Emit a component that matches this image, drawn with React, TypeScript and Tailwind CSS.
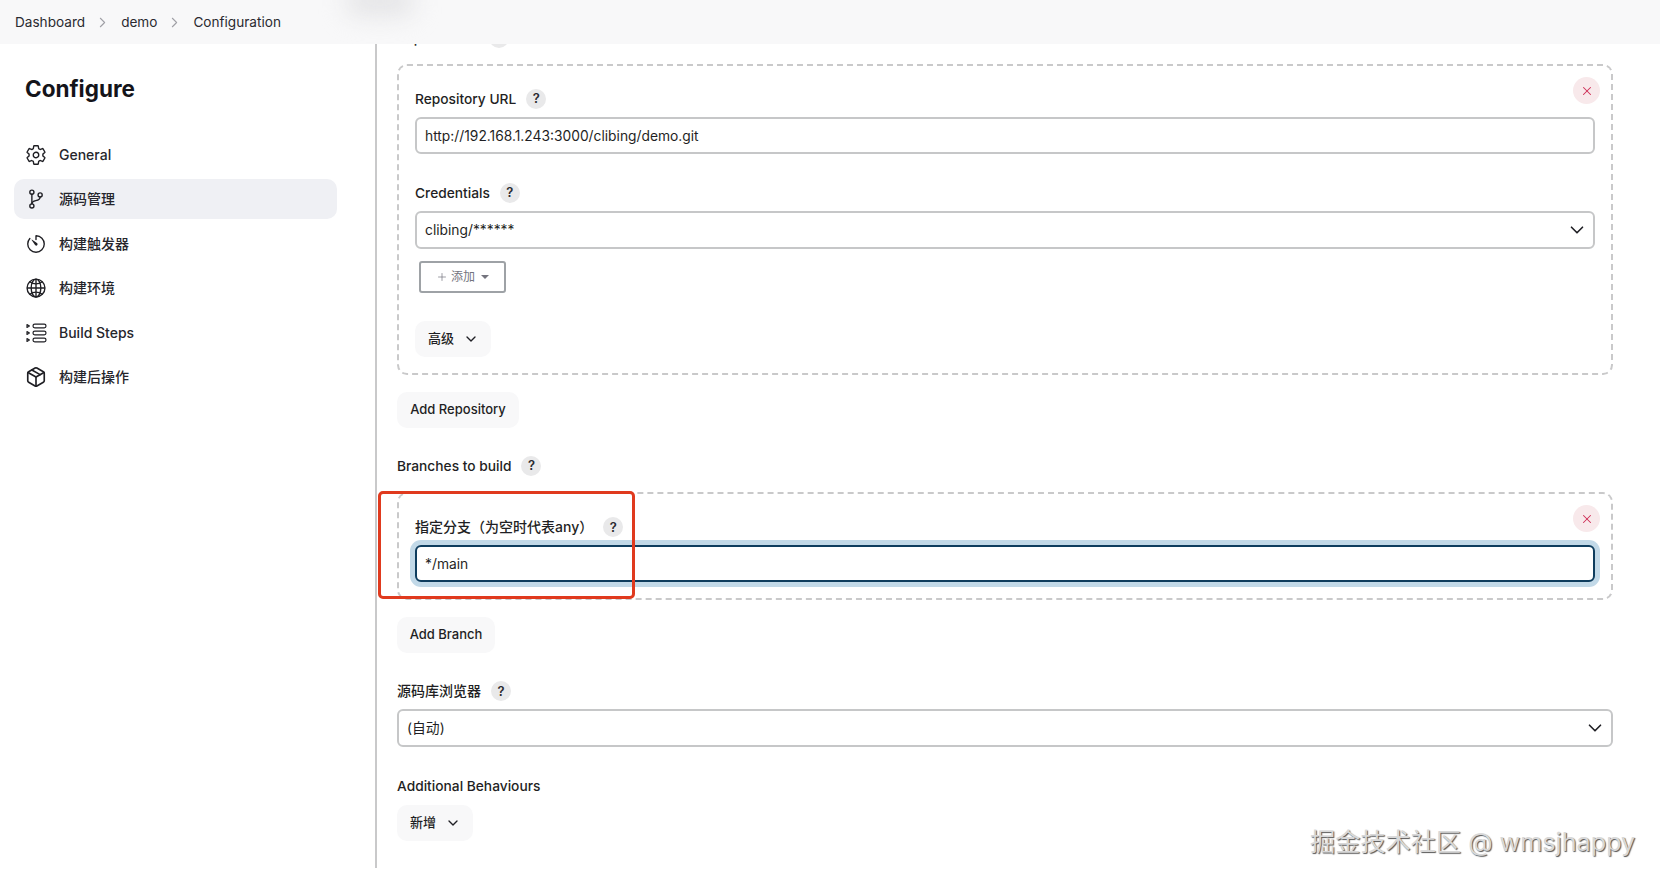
import React from "react";
import { ChevronDown, ChevronRight, X, Package, Plus } from "lucide-react";
import { IoSettingsOutline, IoGitBranchOutline, IoTimerOutline, IoGlobeOutline } from "react-icons/io5";

const font = "[font-family:Inter,'Noto_Sans_CJK_SC',sans-serif]";

function StepsIcon() {
  return (
    <svg width="21" height="20" viewBox="0 0 21 20" fill="none" stroke="currentColor" strokeWidth="1.2" strokeLinejoin="round">
      <path d="M1 1.6 3.4 3 1 4.4Z" />
      <path d="M1 8.6 3.4 10 1 11.4Z" />
      <path d="M1 15.6 3.4 17 1 18.4Z" />
      <rect x="7" y="1.2" width="13" height="3.6" rx="1.8" />
      <rect x="7" y="8.2" width="13" height="3.6" rx="1.8" />
      <rect x="7" y="15.2" width="13" height="3.6" rx="1.8" />
    </svg>
  );
}

function Help() {
  return (
    <span className="flex h-5 w-5 items-center justify-center rounded-full bg-[#e9e9ea] text-[13px] font-semibold text-[#2a2a30]">?</span>
  );
}

function Label({ text, className = "text-[13.75px]" }: { text: string; className?: string }) {
  return (
    <div className={`flex h-5 items-center gap-[10px] font-medium text-[#1f1f24] ${className}`}>
      <span>{text}</span>
      <Help />
    </div>
  );
}

function Remove({ className }: { className: string }) {
  return (
    <span className={`absolute right-[11px] flex h-[27px] w-[27px] items-center justify-center rounded-full bg-[#f8e9eb] text-[#cf2f57] ${className}`}>
      <X size={14} strokeWidth={1.8} />
    </span>
  );
}

function TextBox({ value }: { value: string }) {
  return (
    <input
      readOnly
      value={value}
      className="block h-[37px] w-full rounded-md border-2 border-[#c6c7c8] bg-white px-2 text-[13.8px] text-[#1f1f24] outline-none"
    />
  );
}

function SelectBox({ value }: { value: string }) {
  return (
    <div className="flex h-[38px] items-center justify-between rounded-md border-2 border-[#c6c7c8] bg-white pl-2 pr-[5px] text-[13.8px] text-[#1f1f24]">
      <span>{value}</span>
      <ChevronDown size={22} strokeWidth={1.8} className="text-[#1f1f24]" />
    </div>
  );
}

function GhostButton({ children, className }: { children: React.ReactNode; className: string }) {
  return (
    <button className={`flex h-9 items-center rounded-[10px] bg-[#f8f8f9] text-[13px] font-medium text-[#1f1f24] ${className}`}>
      {children}
    </button>
  );
}

const nav = [
  { icon: <IoSettingsOutline size={22} />, label: "General" },
  { icon: <IoGitBranchOutline size={22} />, label: "源码管理", active: true },
  { icon: <IoTimerOutline size={22} />, label: "构建触发器" },
  { icon: <IoGlobeOutline size={22} />, label: "构建环境" },
  { icon: <StepsIcon />, label: "Build Steps" },
  { icon: <Package size={22} strokeWidth={1.8} />, label: "构建后操作" },
];

export default function App() {
  return (
    <div className={`relative h-[881px] w-[1660px] overflow-hidden bg-white ${font}`}>
      <header className="relative z-10 flex h-11 items-center overflow-hidden bg-[#f8f8f9] pl-[15px] text-[13.6px] font-normal text-[#2a2a30]">
        <span className="absolute left-[345px] top-[-14px] h-[30px] w-[70px] rounded-full bg-[#e4e4e6] blur-md" />
        <span>Dashboard</span>
        <ChevronRight size={17} strokeWidth={1.5} className="ml-[9px] mr-[10px] text-[#a0a0a6]" />
        <span>demo</span>
        <ChevronRight size={17} strokeWidth={1.5} className="ml-[9px] mr-[10px] text-[#a0a0a6]" />
        <span>Configuration</span>
      </header>

      <div className="flex h-[824px]">
        <aside className="w-[377px] shrink-0 border-r-2 border-[#c9c9ca] pl-[14px]">
          <h1 className="ml-[11px] mt-[30px] h-[30px] text-[22.5px] leading-[30px] font-bold text-[#14141a]">Configure</h1>
          <nav className="mt-[31px] flex w-[323px] flex-col gap-[4.4px]">
            {nav.map((item) => (
              <div
                key={item.label}
                className={`flex h-10 items-center gap-3 rounded-[10px] pl-[11px] text-sm font-medium text-[#26262c] ${item.active ? "bg-[#eff0f4]" : ""}`}
              >
                <span className="flex w-[22px] justify-center text-[#1f1f24]">{item.icon}</span>
                <span>{item.label}</span>
              </div>
            ))}
          </nav>
        </aside>

        <main className="min-w-0 flex-1 pl-5 pr-[47px]">
          <div className="-mt-4 mb-4"><Label text="Repositories" /></div>

          <section className="relative rounded-[10px] border-2 border-dashed border-[#c9c9ca] pb-4 pl-4 pr-4 pt-[23px]">
            <Remove className="top-[11px]" />
            <Label text="Repository URL" />
            <div className="mt-2"><TextBox value="http://192.168.1.243:3000/clibing/demo.git" /></div>
            <div className="mt-[29px]"><Label text="Credentials" /></div>
            <div className="mt-2"><SelectBox value="clibing/******" /></div>
            <button className="ml-1 mt-3 flex h-8 w-[87px] items-center justify-center gap-[3px] rounded-[3px] border-2 border-[#9ea2a6] bg-white text-xs text-[#74747e]">
              <Plus size={12} strokeWidth={1.4} />
              <span>添加</span>
              <span className="ml-[3px] h-0 w-0 border-x-[4px] border-t-[4px] border-x-transparent border-t-[#74747e]" />
            </button>
            <GhostButton className="mt-7 w-[76px] gap-[9px] pl-[13px]">
              <span>高级</span>
              <ChevronDown size={16} strokeWidth={2} />
            </GhostButton>
          </section>

          <GhostButton className="mt-[17px] w-[122px] justify-center">Add Repository</GhostButton>

          <div className="mt-7"><Label text="Branches to build" /></div>

          <section className="relative mt-4 rounded-[10px] border-2 border-dashed border-[#c9c9ca] pb-4 pl-4 pr-4 pt-[23px]">
            <Remove className="top-[11px]" />
            <Label text="指定分支（为空时代表any）" className="text-sm" />
            <input
              readOnly
              value="*/main"
              className="mt-2 block h-[37px] w-full rounded-md border-2 border-[#0f3d5e] bg-white px-2 text-[13.8px] text-[#1f1f24] shadow-[0_0_0_5px_#c2d9e8] outline-none"
            />
          </section>

          <GhostButton className="mt-[17px] w-[98px] justify-center">Add Branch</GhostButton>

          <div className="mt-7"><Label text="源码库浏览器" className="text-sm" /></div>
          <div className="mt-2"><SelectBox value="(自动)" /></div>

          <div className="mt-[29px] h-5 text-[13.75px] leading-5 font-medium text-[#1f1f24]">Additional Behaviours</div>
          <GhostButton className="mt-[9px] w-[76px] gap-[9px] pl-[13px]">
            <span>新增</span>
            <ChevronDown size={16} strokeWidth={2} />
          </GhostButton>
        </main>
      </div>

      <div className="pointer-events-none absolute left-[378px] top-[491px] h-[108px] w-[257px] rounded-[5px] border-[3px] border-[#e03a1e]" />

      <div className="pointer-events-none absolute left-[1310px] top-[825px] text-[25.2px] leading-[34px] text-[#d8d8d8] [text-shadow:1px_1px_1px_#555]">
        掘金技术社区 @ wmsjhappy
      </div>
    </div>
  );
}
